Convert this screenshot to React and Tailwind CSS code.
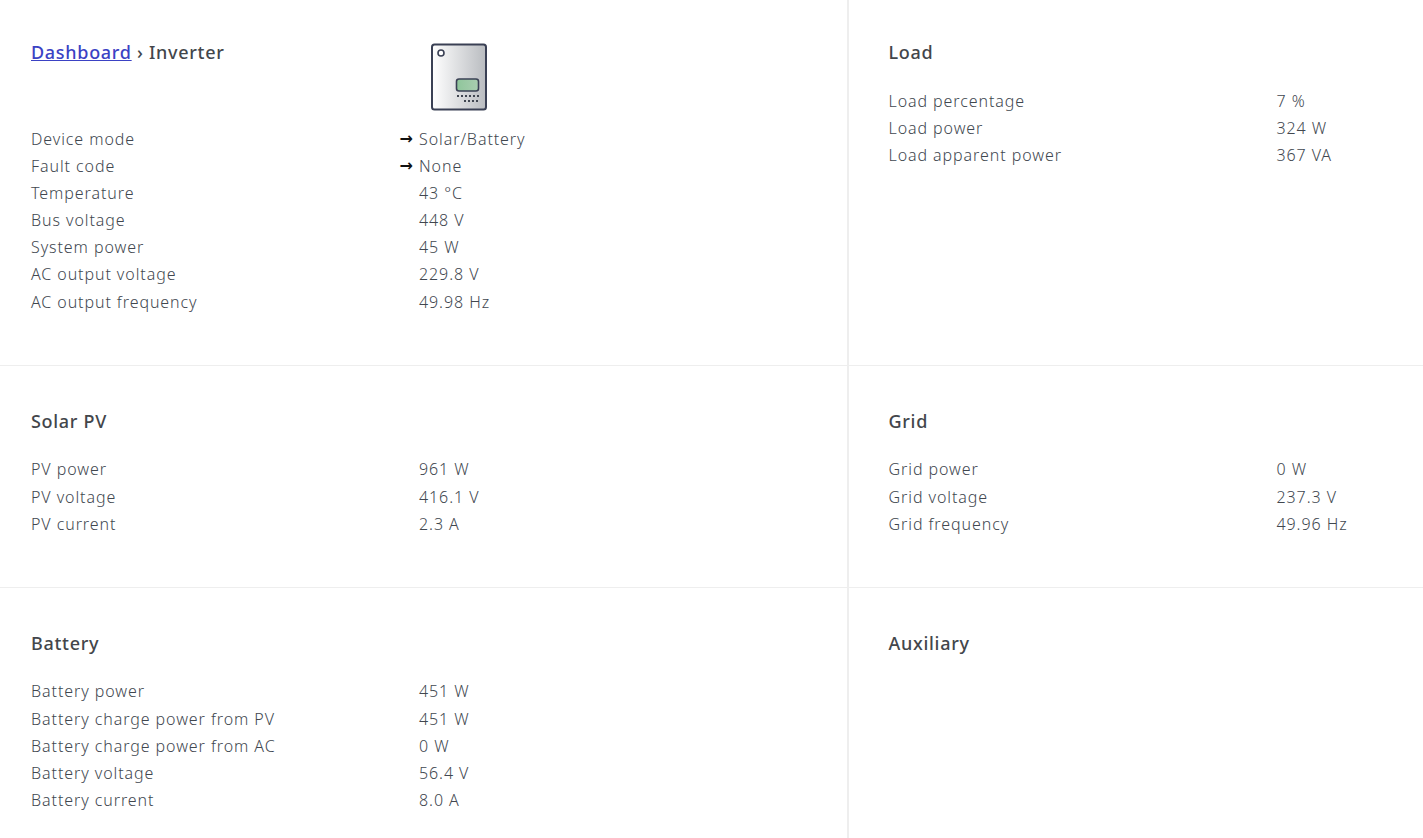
const F = "font-['Noto_Sans','Liberation_Sans',sans-serif]";

function Row({ label, value, arrow, extra }) {
  return (
    <div className={`flex h-[27px] items-center text-[16px] font-light tracking-[0.92px] text-[#41474f] ${extra ? "mt-px" : ""}`}>
      <div className="w-[388px] shrink-0">{label}</div>
      <div className="relative">
        {arrow && <span className="absolute -left-[19.5px] top-[2px] text-[#111] font-['DejaVu_Sans',sans-serif] font-bold tracking-normal text-[16px] leading-[20px]">→</span>}
        {value}
      </div>
    </div>
  );
}

function Heading({ children }) {
  return <h2 className="text-[18px] leading-[27px] font-medium tracking-[0.7px] text-[#43464b]">{children}</h2>;
}

function Section({ title, rows, className = "" }) {
  return (
    <section className={`px-[31px] pt-[42px] ${className}`}>
      <Heading>{title}</Heading>
      <div className="mt-[20px]">
        {rows.map(([l, v], i) => <Row key={l} label={l} value={v} extra={i === 1} />)}
      </div>
    </section>
  );
}

function InverterIcon() {
  return (
    <svg width="58" height="68" viewBox="0 0 58 68" className="block">
      <defs>
        <linearGradient id="g" x1="0" x2="1" y1="0" y2="0">
          <stop offset="0" stopColor="#ffffff" />
          <stop offset="1" stopColor="#b9bcc0" />
        </linearGradient>
        <linearGradient id="s" x1="0" x2="1" y1="0" y2="0">
          <stop offset="0" stopColor="#8fc69b" />
          <stop offset="1" stopColor="#a9cdb0" />
        </linearGradient>
      </defs>
      <rect x="1" y="1.5" width="54" height="65" rx="2.5" fill="url(#g)" stroke="#3a4054" strokeWidth="2" />
      <circle cx="10" cy="10" r="3" fill="#fff" stroke="#3a4054" strokeWidth="1.6" />
      <rect x="25.5" y="36" width="22" height="12" rx="2.5" fill="url(#s)" stroke="#3a4054" strokeWidth="1.6" />
      {[26, 30, 34, 38, 42, 46].map(x => <rect key={x} x={x} y="52" width="2" height="2" fill="#3f4550" />)}
      {[33, 37, 41, 45].map(x => <rect key={x} x={x} y="57" width="2" height="2" fill="#3f4550" />)}
    </svg>
  );
}

export default function App() {
  return (
    <div className={`${F} bg-white h-[838px] overflow-hidden grid grid-cols-[849px_1fr] grid-rows-[366px_222px_250px]`}>
      <section className="border-r-2 border-b border-[#eeeeee] px-[31px] pt-[39px]">
        <div className="flex h-[86px]">
          <h2 className="w-[400px] shrink-0 text-[18px] leading-[27px] font-medium tracking-[0.7px] text-[#43464b]">
            <a href="#" className="text-[#3b42c4] underline">Dashboard</a> › Inverter
          </h2>
          <div className="mt-[4px]"><InverterIcon /></div>
        </div>
        <Row label="Device mode" value="Solar/Battery" arrow />
        <Row label="Fault code" value="None" arrow />
        <Row label="Temperature" value="43 °C" />
        <Row label="Bus voltage" value="448 V" />
        <Row label="System power" value="45 W" />
        <Row label="AC output voltage" value="229.8 V" />
        <Row label="AC output frequency" value="49.98 Hz" extra />
      </section>
      <section className="border-b border-[#eeeeee] pl-[39.5px] pr-[31px] pt-[39px]">
        <Heading>Load</Heading>
        <div className="mt-[21px]">
          <Row label="Load percentage" value="7 %" />
          <Row label="Load power" value="324 W" />
          <Row label="Load apparent power" value="367 VA" />
        </div>
      </section>
      <Section title="Solar PV" className="border-r-2 border-b border-[#eeeeee]" rows={[["PV power", "961 W"], ["PV voltage", "416.1 V"], ["PV current", "2.3 A"]]} />
      <Section title="Grid" className="border-b border-[#eeeeee] !pl-[39.5px]" rows={[["Grid power", "0 W"], ["Grid voltage", "237.3 V"], ["Grid frequency", "49.96 Hz"]]} />
      <Section title="Battery" className="border-r-2 border-[#eeeeee]" rows={[["Battery power", "451 W"], ["Battery charge power from PV", "451 W"], ["Battery charge power from AC", "0 W"], ["Battery voltage", "56.4 V"], ["Battery current", "8.0 A"]]} />
      <Section title="Auxiliary" className="!pl-[39.5px]" rows={[]} />
    </div>
  );
}
